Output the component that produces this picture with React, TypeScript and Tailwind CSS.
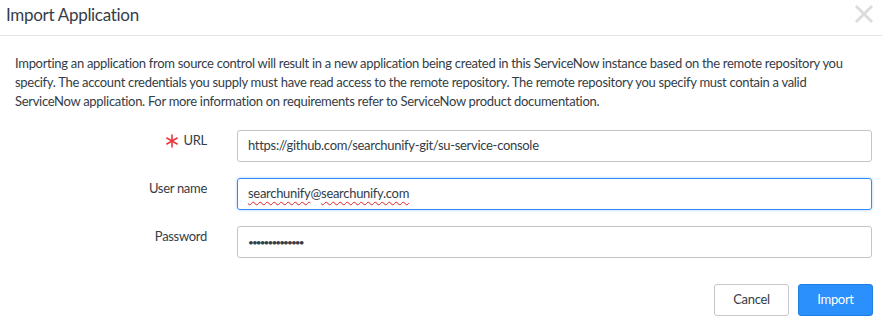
import React from "react";

function Asterisk() {
  return (
    <svg width="14" height="14" viewBox="0 0 14 14" className="mr-[5px] mt-[3px]">
      <path d="M7 0.5 V13.5 M1.4 3.75 L12.6 10.25 M1.4 10.25 L12.6 3.75" stroke="#e8383d" strokeWidth="1.6" />
    </svg>
  );
}

function Row({ label, required, children }: { label: string; required?: boolean; children: React.ReactNode }) {
  return (
    <div className="flex items-start">
      <div className="w-[207px] shrink-0 flex justify-end items-start pt-[1px] text-[13px] tracking-[-0.3px] leading-[19px]">
        {required && <Asterisk />}
        <span>{label}</span>
      </div>
      <div className="ml-[30px] flex-1">{children}</div>
    </div>
  );
}

export default function App() {
  return (
    <div className="w-[882px] h-[326px] bg-white text-[#343d47] font-['Lato',sans-serif] overflow-hidden">
      <div className="h-[36px] border-b border-[#e3e3e3] flex items-start justify-between pl-[6px] pr-[6px]">
        <div className="text-[17px] tracking-[-0.3px] leading-[22px] pt-[4px]">Import Application</div>
        <svg width="20" height="20" viewBox="0 0 20 20" className="mt-[4px] mr-[2px]">
          <path d="M2 2 L18 18 M18 2 L2 18" stroke="#dcdcdc" strokeWidth="3" />
        </svg>
      </div>
      <p className="px-[15px] pt-[18px] text-[13px] tracking-[-0.3px] leading-[19px] whitespace-nowrap">
        Importing an application from source control will result in a new application being created in this ServiceNow instance based on the remote repository you
        <br />
        specify. The account credentials you supply must have read access to the remote repository. The remote repository you specify must contain a valid
        <br />
        ServiceNow application. For more information on requirements refer to ServiceNow product documentation.
      </p>
      <div className="pr-[10px] mt-[19px] flex flex-col gap-[16px]">
        <Row label="URL" required>
          <div className="h-[32px] border border-[#c4c4c4] rounded-[3px] px-[10px] flex items-center text-[13px] tracking-[-0.3px]">
            https://github.com/searchunify-git/su-service-console
          </div>
        </Row>
        <Row label="User name">
          <div className="h-[32px] border border-[#2f8cf5] rounded-[3px] px-[10px] flex items-center text-[13px] tracking-[-0.3px] shadow-[0_0_3px_rgba(47,140,245,0.45)]">
            <span className="underline decoration-wavy decoration-[#e02020] decoration-1 underline-offset-[3px]">searchunify</span>
            <span>@</span>
            <span className="underline decoration-wavy decoration-[#e02020] decoration-1 underline-offset-[3px]">searchunify.com</span>
          </div>
        </Row>
        <Row label="Password">
          <div className="h-[32px] border border-[#c4c4c4] rounded-[3px] px-[10px] flex items-center text-[10px] tracking-[-1.9px] text-[#343d47]">
            ••••••••••••••
          </div>
        </Row>
      </div>
      <div className="flex justify-end gap-[9px] pr-[9px] mt-[26px]">
        <button className="w-[75px] h-[32px] border border-[#c8c8c8] rounded-[3px] bg-white text-[13px] tracking-[-0.3px] text-[#343d47]">Cancel</button>
        <button className="w-[75px] h-[32px] border border-[#1f7de6] rounded-[3px] bg-[#2b8ffc] text-[13px] tracking-[-0.3px] text-white">Import</button>
      </div>
    </div>
  );
}
